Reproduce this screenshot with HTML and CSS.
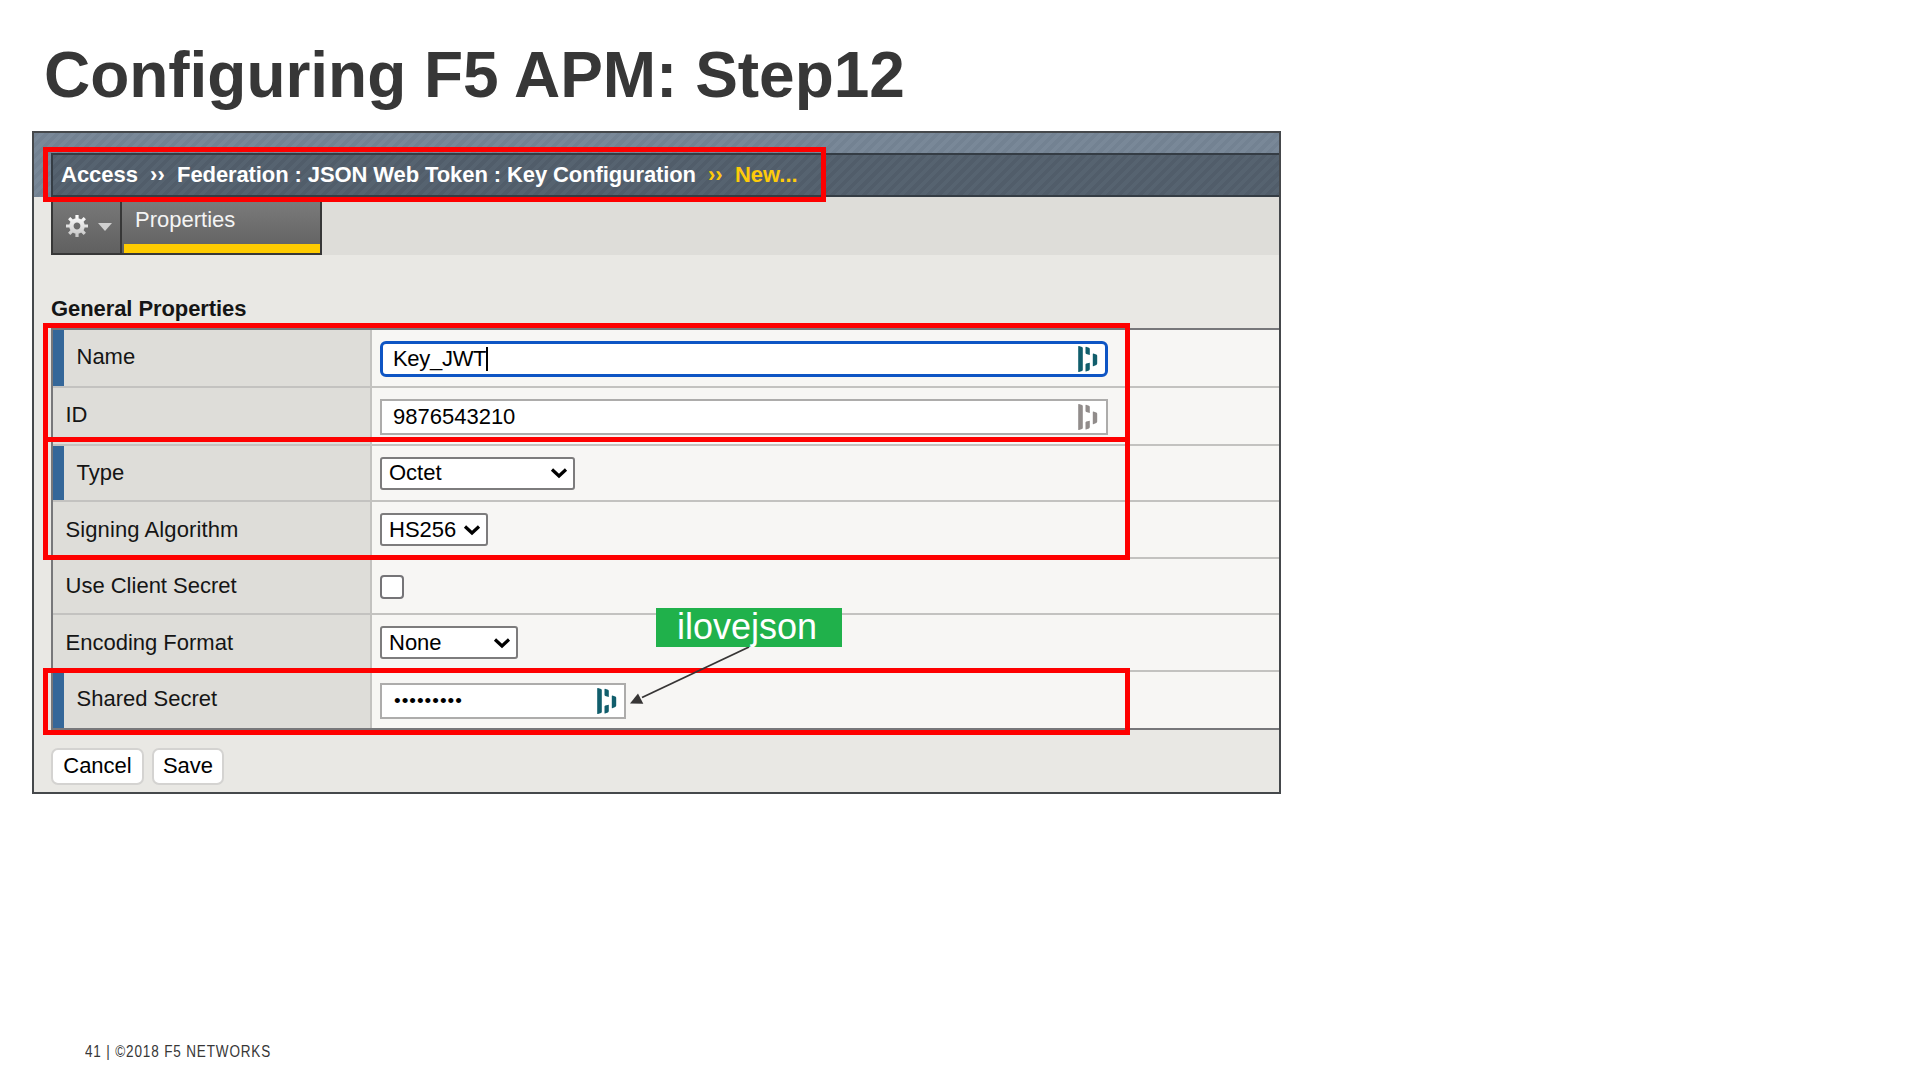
FILE: index.html
```html
<!DOCTYPE html>
<html lang="en">
<head>
<meta charset="utf-8">
<title>Configuring F5 APM: Step12</title>
<link rel="stylesheet" href="styles.css">
</head>
<body>
<svg class="defs" width="0" height="0" aria-hidden="true">
  <symbol id="vault" viewBox="0 0 20 28">
    <path d="M1 1l3 1q.8.300.8 1v22q0 .7-.8 1l-3 1q-.8.200-.8-.6V1.600Q.2.800 1 1zM8 1.800l3 1q.8.300.8 1.200v6L8.300 9Q7.500 8.600 7.500 7.800V2.300q0-.6.500-.5zM8.300 18.400l3.500-.6v6.200q0 1-.8 1.400l-3 1q-.5.100-.5-.5v-6.300q0-.9.800-1.200zM15.300 8.400l3 1q.9.400.9 1.300v7.900q0 1-.9 1.400l-3 1.200q-.5.100-.5-.5V8.900q0-.6.500-.5z"/>
  </symbol>
  <symbol id="chevron" viewBox="0 0 18 12">
    <path d="M2 2.500l7 6.500 7-6.500" fill="none" stroke="#000" stroke-width="3.200"/>
  </symbol>
</svg>
<main class="slide">
  <h1 class="title">Configuring F5 APM: Step12</h1>

  <section class="panel">
    <header class="banner">
      <nav class="crumbs">
        <span>Access</span><span class="sep">››</span><span class="path">Federation : JSON Web Token : Key Configuration</span><span class="sep current">››</span><span class="current">New...</span>
      </nav>
    </header>
    <div class="tabs">
      <div class="gear-tab">
        <svg class="gear" width="24" height="24" viewBox="-12 -12 24 24">
          <defs><linearGradient id="gearFill" gradientUnits="userSpaceOnUse" x1="0" y1="-11" x2="0" y2="11"><stop offset="0" stop-color="#fff"/><stop offset="1" stop-color="#c4c4c4"/></linearGradient></defs>
          <g stroke="url(#gearFill)" fill="none">
            <circle r="5.600" stroke-width="4.400"/>
            <path stroke-width="3.200" d="M.01-11V-7M.01 7v4M-11 .01h4M7 .01h4M-7.800-7.800L-5-5M5 5l2.800 2.800M-7.800 7.800L-5 5M5-5l2.800-2.800"/>
          </g>
        </svg>
        <svg class="caret" width="14" height="8" viewBox="0 0 14 8"><path fill="#d0d0d0" d="M0 0h14L7 8z"/></svg>
      </div>
      <div class="tab">Properties</div>
    </div>

    <h2 class="heading">General Properties</h2>
    <div class="table">
      <div class="row tall">
        <div class="label required">Name</div>
        <div class="value"><div class="field wide focused"><span class="typed">Key_JWT</span><svg class="vault" width="20" height="28"><use href="#vault"/></svg></div></div>
      </div>
      <div class="row tall">
        <div class="label">ID</div>
        <div class="value"><div class="field wide muted"><span>9876543210</span><svg class="vault" width="20" height="28"><use href="#vault"/></svg></div></div>
      </div>
      <div class="row">
        <div class="label required">Type</div>
        <div class="value"><div class="select octet"><span>Octet</span><svg width="18" height="12"><use href="#chevron"/></svg></div></div>
      </div>
      <div class="row mid">
        <div class="label signing">Signing Algorithm</div>
        <div class="value"><div class="select algo"><span>HS256</span><svg width="18" height="12"><use href="#chevron"/></svg></div></div>
      </div>
      <div class="row">
        <div class="label">Use Client Secret</div>
        <div class="value"><div class="checkbox"></div></div>
      </div>
      <div class="row mid">
        <div class="label">Encoding Format</div>
        <div class="value"><div class="select none"><span>None</span><svg width="18" height="12"><use href="#chevron"/></svg></div></div>
      </div>
      <div class="row tall">
        <div class="label required">Shared Secret</div>
        <div class="value"><div class="field secret"><span class="dots">•••••••••</span><svg class="vault" width="20" height="28"><use href="#vault"/></svg></div></div>
      </div>
    </div>
    <div class="actions">
      <div class="button cancel">Cancel</div>
      <div class="button save">Save</div>
    </div>
  </section>

  <footer class="footer">41 | ©2018 F5 NETWORKS</footer>

  <div class="mark mark-path"></div>
  <div class="mark mark-name"></div>
  <div class="mark mark-type"></div>
  <div class="mark mark-secret"></div>
  <svg class="arrow" width="130" height="64" viewBox="0 0 130 64">
    <path d="M119 1L12 51.500" stroke="#373535" stroke-width="1.900" fill="none"/>
    <path d="M0 57.500L8 47.500l5.300 10.300z" fill="#373535"/>
  </svg>
  <div class="callout">ilovejson</div>
</main>
</body>
</html>
```
FILE: styles.css
```css
* { box-sizing: border-box; }

body {
  margin: 0;
  background: #fff;
  font-family: "Liberation Sans", Arial, sans-serif;
}

.defs { position: absolute; }

.slide {
  position: relative;
  width: 1920px;
  height: 1080px;
  overflow: hidden;
  display: flex;
  flex-direction: column;
  align-items: flex-start;
}

.title {
  margin: 0;
  height: 131px;
  padding: 38px 0 0 44px;
  font-size: 64px;
  line-height: 74px;
  font-weight: 700;
  letter-spacing: -0.03px;
  color: #373737;
  white-space: nowrap;
}

.panel {
  width: 1249px;
  height: 663px;
  margin-left: 32px;
  border: 2px solid #45484b;
  background: #e9e8e4;
  font-size: 22px;
  line-height: 24px;
  color: #151515;
}

/* Striped banner and breadcrumb trail */
.banner {
  height: 64px;
  padding: 20px 0 0 17px;
  background: repeating-linear-gradient(135deg, #738292 0 3.7px, #798898 3.7px 7.5px);
}

.crumbs {
  display: flex;
  height: 44px;
  padding: 8px 0 0 8px;
  border: 2px solid #343c44;
  border-right: 0;
  background: repeating-linear-gradient(135deg, #515d6a 0 3.7px, #566370 3.7px 7.5px);
  color: #fff;
  font-weight: 700;
  white-space: nowrap;
}

.crumbs .sep { width: 15px; margin: 0 12px 0 12px; }
.crumbs .path { letter-spacing: -0.1px; }
.crumbs .current { color: #fecb0a; }

/* Tab strip */
.tabs {
  display: flex;
  height: 58px;
  margin-left: 17px;
  background: #deddd9;
}

.gear-tab {
  width: 71px;
  display: flex;
  align-items: center;
  gap: 9px;
  padding: 1px 0 0 12px;
  border: 2px solid #373737;
  border-top: 0;
  background: linear-gradient(#7a7a7a, #606060);
}

.caret { margin-top: 3px; }

.tab {
  width: 200px;
  padding: 11px 0 0 13px;
  border: solid #373737;
  border-width: 0 2px 2px 0;
  background: linear-gradient(#fecb00, #fecb00) 2px 100% / 100% 9px no-repeat, linear-gradient(#7d7d7d, #606060);
  color: #f4f4f4;
}

.heading {
  margin: 42px 0 7px 17px;
  font-size: 22px;
  line-height: 24px;
  letter-spacing: -0.08px;
}

/* Property table */
.table {
  margin-left: 17px;
  border: 2px solid #77777a;
  border-width: 2px 0 0 2px;
}

.row {
  display: grid;
  grid-template-columns: 319px 1fr;
  height: 56px;
  border-bottom: 2px solid #c3c2c0;
}

.row.mid { height: 57px; }
.row.tall { height: 58px; }
.row:last-child { border-bottom-color: #77777a; }

.label {
  padding: 15px 0 0 12.5px;
  background: #deddd9;
  border-right: 2px solid #c3c2c0;
}

.row.mid .label { padding-top: 16px; }
.label.signing { letter-spacing: 0.1px; }

.label.required {
  border-left: 11px solid #356799;
  padding-left: 12.5px;
}

.value {
  display: flex;
  align-items: center;
  padding-left: 8px;
  background: #f7f6f4;
}

.field {
  display: flex;
  align-items: center;
  justify-content: space-between;
  height: 36px;
  padding: 0 8px 0 11px;
  border: 2px solid #adacab;
  background: #fff;
  color: #000;
}

.field.wide { width: 728px; }
.row.tall .field { margin-top: 2px; }
.field.secret { width: 246px; padding-right: 7px; }
.row.tall .field.focused { border: 3px solid #0e55c4; border-radius: 6px; padding: 0 7px 0 10px; }
.typed { border-right: 2px solid #000; letter-spacing: -0.3px; }
.dots { font-size: 19px; letter-spacing: 1px; padding-left: 1px; }
.vault { fill: #115e6c; }
.muted .vault { fill: #918c8b; }

.select {
  display: flex;
  align-items: center;
  justify-content: space-between;
  height: 33px;
  padding: 0 5px 0 7px;
  border: 2px solid #7d7c7d;
  border-radius: 3px;
  background: #fff;
  color: #000;
}

.octet { width: 195px; }
.algo { width: 108px; }
.none { width: 138px; }

.checkbox {
  width: 24px;
  height: 24px;
  margin-top: 2px;
  border: 2px solid #757477;
  border-radius: 4px;
  background: #fff;
}

.actions {
  display: flex;
  gap: 8px;
  padding: 18px 0 0 17px;
}

.button {
  height: 37px;
  border: 2px solid #d4d3d1;
  border-radius: 7px;
  background: #fff;
  color: #000;
  text-align: center;
  line-height: 32px;
}

.cancel { width: 93px; }
.save { width: 72px; }

.footer {
  margin: 248px 0 0 85px;
  font-size: 16px;
  line-height: 20px;
  letter-spacing: 1px;
  color: #373737;
  white-space: nowrap;
  transform: scaleX(.845);
  transform-origin: 0 0;
}

/* Annotations laid over the panel */
.mark { position: absolute; left: 43px; width: 1087px; border: 5px solid #fe0000; }
.mark-path { top: 147px; width: 783px; height: 55px; }
.mark-name { top: 323px; height: 119px; }
.mark-type { top: 437px; height: 123px; }
.mark-secret { top: 668px; height: 67px; }

.arrow { position: absolute; left: 630px; top: 646px; }

.callout {
  position: absolute;
  left: 656px;
  top: 608px;
  width: 186px;
  height: 39px;
  padding-left: 21px;
  background: #20b14b;
  color: #fff;
  font-size: 36px;
  line-height: 38px;
}
```
